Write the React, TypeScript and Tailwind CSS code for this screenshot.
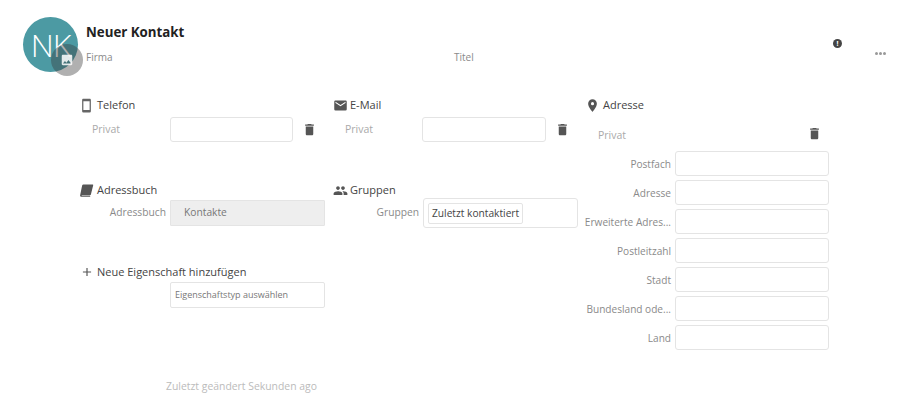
import type { ReactNode } from "react";

function Icon({ d, size = 16, className = "" }: { d: string; size?: number; className?: string }) {
  return (
    <svg viewBox="0 0 24 24" width={size} height={size} className={`shrink-0 fill-[#555] ${className}`}>
      <path d={d} fillRule="evenodd" />
    </svg>
  );
}

const phone = "M17,19H7V5H17ZM17,1H7C5.89,1 5,1.89 5,3V21A2,2 0 0,0 7,23H17A2,2 0 0,0 19,21V3C19,1.89 18.1,1 17,1Z";
const mail = "M20,8L12,13L4,8V6L12,11L20,6M20,4H4C2.89,4 2,4.89 2,6V18A2,2 0 0,0 4,20H20A2,2 0 0,0 22,18V6C22,4.89 21.1,4 20,4Z";
const pin = "M12,11.5A2.5,2.5 0 0,1 9.5,9A2.5,2.5 0 0,1 12,6.5A2.5,2.5 0 0,1 14.5,9A2.5,2.5 0 0,1 12,11.5M12,2A7,7 0 0,0 5,9C5,14.25 12,22 12,22C12,22 19,14.25 19,9A7,7 0 0,0 12,2Z";
const group = "M16 11c1.66 0 2.99-1.34 2.99-3S17.66 5 16 5s-3 1.34-3 3 1.34 3 3 3zm-8 0c1.66 0 2.99-1.34 2.99-3S9.66 5 8 5 5 6.34 5 8s1.34 3 3 3zm0 2c-2.33 0-7 1.17-7 3.5V19h14v-2.500c0-2.33-4.67-3.5-7-3.5zm8 0c-.29 0-.62.02-.97.05 1.16.84 1.97 1.97 1.97 3.45V19h6v-2.5c0-2.33-4.67-3.5-7-3.5z";
const book = "M7 2.500h15c.6 0 .9.5.7 1L19 18.500c-.2.8-.8 1.200-1.500 1.200H5c-.7 0-1 .5-1 .8h13.500c.4 0 .6.400.5.800l-.2.700H4C2.300 22 1.500 20.800 1.800 19.500L5 4C5.300 3 6 2.500 7 2.500z";
const plus = "M19 13h-6v6h-2v-6H5v-2h6V5h2v6h6v2z";
const trash = "M6 19c0 1.1.9 2 2 2h8c1.1 0 2-.9 2-2V7H6v12zM19 4h-3.5l-1-1h-5l-1 1H5v2h14V4z";
const image = "M19 3H5c-1.1 0-2 .9-2 2v14c0 1.1.9 2 2 2h14c1.1 0 2-.9 2-2V5c0-1.1-.9-2-2-2zM8.500 13.500l2.500 3.010L14.500 12l4.500 6H5l3.500-4.500z";

function Heading({ icon, children, textClass = "" }: { icon: ReactNode; children: ReactNode; textClass?: string }) {
  return (
    <div className="flex h-5 items-center text-[11px] text-[#444]">
      <div className="flex w-[17px] shrink-0 items-center">{icon}</div>
      <span className={textClass}>{children}</span>
    </div>
  );
}

function AddrRow({ label }: { label: string }) {
  return (
    <div className="flex h-[25px] items-center">
      <div className="flex w-[90px] justify-end whitespace-nowrap pr-1 pt-[2px] text-[10.100px] text-[#8a8a8a]">{label}</div>
      <div className="h-[25px] w-[154px] rounded-[3px] border border-[#e4e4e4] bg-white" />
    </div>
  );
}

export default function App() {
  return (
    <div className="relative h-[420px] w-[900px] overflow-hidden bg-white font-['Open_Sans',sans-serif]">
      <header className="flex h-[92px] pl-[23px] pt-[17px]">
        <div className="relative h-[55px] w-[55px] shrink-0 rounded-full bg-[#4c9aa3] text-center text-[32px] font-light leading-[55px] tracking-[-1px] text-white">
          NK
          <div className="absolute left-[28px] top-[27px] flex h-8 w-8 items-center justify-center rounded-full bg-[#3a3a3a]/40">
            <Icon d={image} size={14} className="fill-white/85" />
          </div>
        </div>
        <div className="ml-[8px] flex-1">
          <div className="mt-[5px] text-[13.300px] font-bold leading-5 text-[#222]">Neuer Kontakt</div>
          <div className="mt-[5px] flex text-[10px] leading-5 text-[#8a8a8a]">
            <span className="w-[368px]">Firma</span>
            <span>Titel</span>
          </div>
        </div>
        <div className="flex w-[67px] items-start">
          <div className="mt-[22px] flex h-[9px] w-[9px] items-center justify-center rounded-full bg-[#444] text-[7px] font-bold leading-none text-white">!</div>
          <div className="ml-[33px] mt-[35px] flex gap-[1px]">
            <div className="h-[3px] w-[3px] rounded-full bg-[#999]" />
            <div className="h-[3px] w-[3px] rounded-full bg-[#999]" />
            <div className="h-[3px] w-[3px] rounded-full bg-[#999]" />
          </div>
        </div>
      </header>

      <main className="flex pl-[80px] pt-[3px]">
        <section className="w-[253px]">
          <Heading icon={<Icon d={phone} size={15} className="-ml-[1px] fill-[#666]" />}>Telefon</Heading>
          <div className="mt-[2px] flex h-[25px] items-center">
            <div className="w-[90px] pl-3 text-[10.500px] text-[#aaa]">Privat</div>
            <div className="h-[25px] w-[123px] rounded-[3px] border border-[#e4e4e4]" />
            <div className="ml-[9px]"><Icon d={trash} size={15} /></div>
          </div>

          <div className="mt-[38px]">
            <Heading icon={<Icon d={book} size={15} className="-ml-[1px]" />}>Adressbuch</Heading>
          </div>
          <div className="flex h-[26px] items-center">
            <div className="w-[86px] text-right text-[10.250px] text-[#8a8a8a]">Adressbuch</div>
            <div className="ml-[4px] flex h-[26px] w-[155px] items-center rounded-[1px] border border-[#e4e4e4] bg-[#eeeeee] pl-[13px] text-[10.250px] text-[#777]">Kontakte</div>
          </div>

          <div className="mt-[36px]">
            <Heading icon={<Icon d={plus} size={14} />}>Neue Eigenschaft hinzufügen</Heading>
          </div>
          <div className="ml-[90px] flex h-[26px] w-[155px] items-center rounded-[2px] border border-[#e4e4e4] pl-1 text-[9px] text-[#777]">Eigenschaftstyp auswählen</div>
        </section>

        <section className="w-[252px]">
          <Heading icon={<Icon d={mail} size={15} />}>E-Mail</Heading>
          <div className="mt-[2px] flex h-[25px] items-center">
            <div className="w-[89px] pl-3 text-[10.500px] text-[#aaa]">Privat</div>
            <div className="h-[25px] w-[124px] rounded-[3px] border border-[#e4e4e4]" />
            <div className="ml-[9px]"><Icon d={trash} size={15} /></div>
          </div>

          <div className="mt-[38px]">
            <Heading icon={<Icon d={group} size={15} />}>Gruppen</Heading>
          </div>
          <div className="-mt-[2px] flex h-[30px] items-center">
            <div className="w-[86px] text-right text-[10.250px] text-[#8a8a8a]">Gruppen</div>
            <div className="ml-[4px] flex h-[30px] w-[155px] items-center rounded-[3px] border border-[#e4e4e4] pl-[4px]">
              <span className="rounded-[2px] border border-[#e4e4e4] px-[3px] text-[10.200px] leading-[19px] text-[#444]">Zuletzt kontaktiert</span>
            </div>
          </div>
        </section>

        <section className="w-[250px]">
          <Heading icon={<Icon d={pin} size={15} />} textClass="ml-[1px]">Adresse</Heading>
          <div className="mt-[10px] flex h-5 items-center">
            <div className="w-[222px] pl-[13px] pt-[2px] text-[10.500px] text-[#aaa]">Privat</div>
            <Icon d={trash} size={15} className="-mt-[3px]" />
          </div>
          <div className="mt-[6px] flex flex-col gap-1">
            {["Postfach", "Adresse", "Erweiterte Adres...", "Postleitzahl", "Stadt", "Bundesland ode...", "Land"].map((l) => (
              <AddrRow key={l} label={l} />
            ))}
          </div>
        </section>
      </main>

      <footer className="absolute left-[166px] top-[378px] text-[10.400px] leading-4 text-[#bbb]">Zuletzt geändert Sekunden ago</footer>
    </div>
  );
}
